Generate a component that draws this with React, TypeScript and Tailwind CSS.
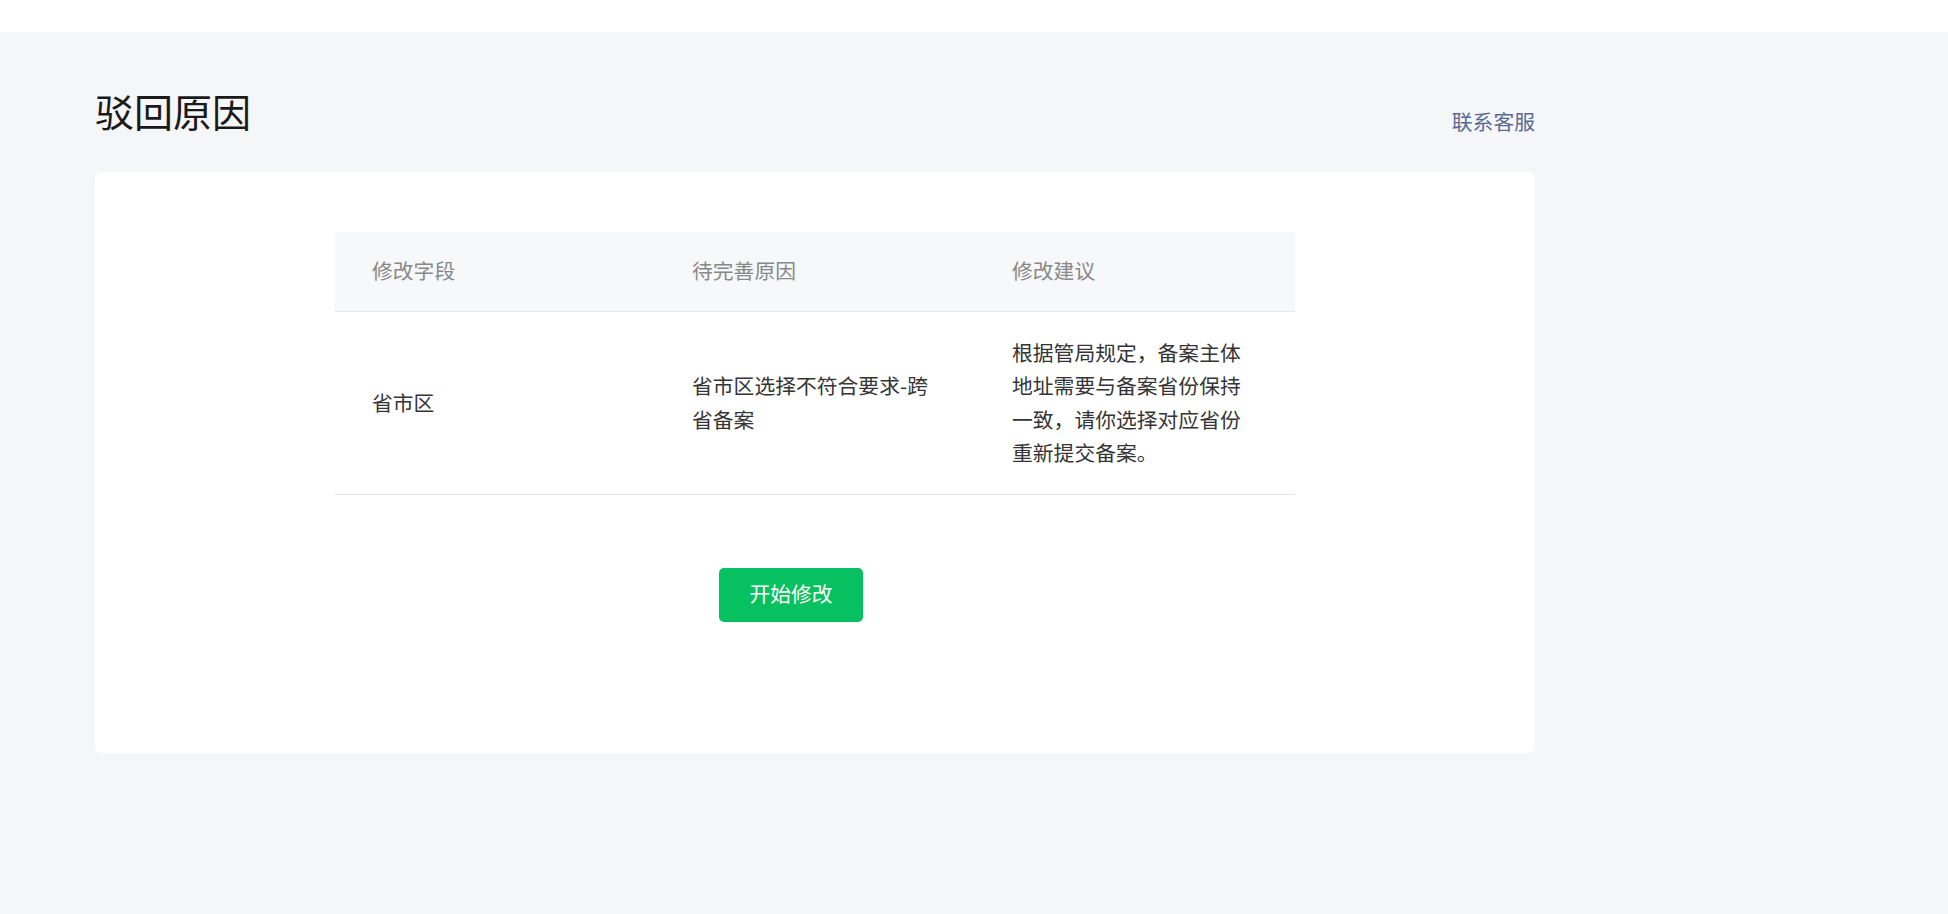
import React from "react";

const rows = [
  {
    field: "省市区",
    reason: "省市区选择不符合要求-跨省备案",
    advice: "根据管局规定，备案主体地址需要与备案省份保持一致，请你选择对应省份重新提交备案。",
  },
];

export default function App() {
  return (
    <div
      className="min-h-[914px] bg-[#f5f6f8] text-[#1a1a1a]"
      style={{ fontFamily: '"Noto Sans CJK SC", "Noto Sans", sans-serif' }}
    >
      {/* top bar */}
      <div className="h-[32px] bg-white" />

      <div className="pl-[95px]">
        <div className="w-[1440px] h-[110px] flex items-start justify-between">
          <h1 className="pt-[49px] text-[39px] leading-[58px] font-normal text-[#1a1a1a]">驳回原因</h1>
          <a href="#" className="mt-[75px] text-[20.8px] leading-[28px] text-[#576b95]">
            联系客服
          </a>
        </div>

        <div className="mt-[30px] w-[1440px] h-[581px] bg-white rounded-[6px] pt-[60px] flex flex-col items-center">
          <table className="w-[960px] table-fixed border-collapse text-[20.8px] leading-[33.5px]">
            <thead>
              <tr className="bg-[#f7f8fa] border-b border-[#e5e6e8]">
                <th className="h-[79px] px-[37px] pb-[2px] text-left font-normal text-[#888888]">修改字段</th>
                <th className="h-[79px] px-[37px] pb-[2px] text-left font-normal text-[#888888]">待完善原因</th>
                <th className="h-[79px] px-[37px] pb-[2px] text-left font-normal text-[#888888]">修改建议</th>
              </tr>
            </thead>
            <tbody>
              {rows.map((r) => (
                <tr key={r.field} className="border-b border-[#e5e6e8]">
                  <td className="px-[37px] py-[24px] align-middle text-[#353535]">{r.field}</td>
                  <td className="px-[37px] py-[24px] align-middle text-[#353535]">{r.reason}</td>
                  <td className="px-[37px] py-[24px] align-middle text-[#353535]">{r.advice}</td>
                </tr>
              ))}
            </tbody>
          </table>

          <div className="w-[960px] mt-[73px]">
            <button className="ml-[384px] w-[144px] h-[54px] pb-[3px] rounded-[5px] bg-[#07c160] text-white text-[20.8px] leading-[28px]">
              开始修改
            </button>
          </div>
        </div>
      </div>
    </div>
  );
}
